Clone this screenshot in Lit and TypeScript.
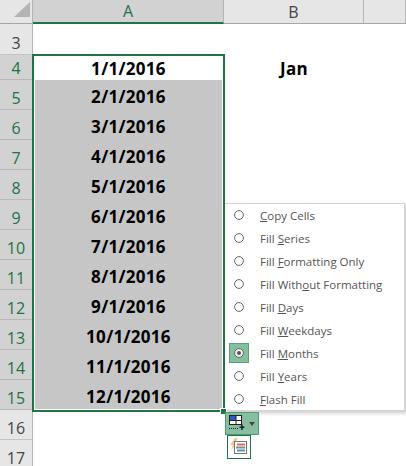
import { LitElement, css, html, svg } from 'lit'
import { customElement } from 'lit/decorators.js'

const ROWS = [
  { n: 3, h: 33 },
  { n: 4, h: 25, a: '1/1/2016', b: 'Jan' },
  { n: 5, h: 30, a: '2/1/2016' },
  { n: 6, h: 30, a: '3/1/2016' },
  { n: 7, h: 30, a: '4/1/2016' },
  { n: 8, h: 30, a: '5/1/2016' },
  { n: 9, h: 30, a: '6/1/2016' },
  { n: 10, h: 30, a: '7/1/2016' },
  { n: 11, h: 30, a: '8/1/2016' },
  { n: 12, h: 30, a: '9/1/2016' },
  { n: 13, h: 30, a: '10/1/2016' },
  { n: 14, h: 30, a: '11/1/2016' },
  { n: 15, h: 30, a: '12/1/2016' },
  { n: 16, h: 30 },
  { n: 17, h: 30 },
]

// [before, underlined key, after]
const MENU: [string, string, string][] = [
  ['', 'C', 'opy Cells'],
  ['Fill ', 'S', 'eries'],
  ['Fill ', 'F', 'ormatting Only'],
  ['Fill With', 'o', 'ut Formatting'],
  ['Fill ', 'D', 'ays'],
  ['Fill ', 'W', 'eekdays'],
  ['Fill ', 'M', 'onths'],
  ['Fill ', 'Y', 'ears'],
  ['', 'F', 'lash Fill'],
]

@customElement('app-root')
export class AppRoot extends LitElement {
  static styles = css`
    :host {
      display: block;
      position: relative;
      width: 406px;
      height: 466px;
      overflow: hidden;
      background: #fff;
      font-family: "Open Sans", "Noto Sans", sans-serif;
    }

    .cols {
      display: grid;
      grid-template-columns: 33px 191px 140px 1fr;
      height: 22px;
    }

    .head {
      display: flex;
      align-items: center;
      justify-content: center;
      background: #e6e6e6;
      border-right: 1px solid #b5b5b5;
      border-bottom: 1px solid #a6a6a6;
      box-sizing: border-box;
      font-size: 16px;
      color: #444;
    }

    .head.active {
      background: #d2d2d2;
      color: #217346;
      border-bottom: 2px solid #217346;
    }

    .corner {
      position: relative;
      overflow: hidden;
    }

    .corner svg {
      display: block;
      position: absolute;
      left: 14px;
      top: 2px;
    }

    .row {
      display: grid;
      grid-template-columns: 33px 191px 140px 1fr;
    }

    .num {
      display: flex;
      align-items: flex-end;
      justify-content: center;
      box-sizing: border-box;
      background: #e6e6e6;
      border-right: 1px solid #b5b5b5;
      border-bottom: 1px solid #c4c4c4;
      font-size: 16px;
      line-height: 22px;
      color: #444;
    }

    .num.active {
      background: #d2d2d2;
      color: #217346;
      border-bottom-color: #b8b8b8;
    }

    .cell {
      display: flex;
      align-items: center;
      justify-content: center;
      box-sizing: border-box;
      padding-top: 2px;
      font-size: 17px;
      letter-spacing: 0.3px;
      font-weight: 700;
      color: #000;
    }

    .cell.fill {
      background: #c6c6c6;
    }

    .selection {
      position: absolute;
      left: 32px;
      top: 54px;
      width: 193px;
      height: 358px;
      box-sizing: border-box;
      border: 2px solid #217346;
      outline: 1px solid #fff;
      outline-offset: -3px;
      pointer-events: none;
    }

    .handle {
      position: absolute;
      left: 220px;
      top: 408px;
      width: 5px;
      height: 5px;
      background: #217346;
      border: 1px solid #fff;
    }

    .menu {
      position: absolute;
      left: 225px;
      top: 203px;
      width: 180px;
      height: 208px;
      box-sizing: border-box;
      display: flex;
      flex-direction: column;
      background: #fff;
      border: 1px solid #d4d4d4;
      border-left: 0;
      box-shadow: 2px 2px 4px rgba(0, 0, 0, 0.22);
      font-size: 11.5px;
      color: #555;
    }

    .item {
      flex: none;
      box-sizing: border-box;
      display: flex;
      align-items: center;
      gap: 11px;
      height: 23px;
      padding: 0 0 1px 4px;
    }

    .radio {
      width: 20px;
      height: 20px;
      box-sizing: border-box;
      display: flex;
      align-items: center;
      justify-content: center;
    }

    .item.on .radio {
      background: #86bfa0;
      border: 1px solid #5f9f7d;
    }

    .radio svg {
      display: block;
    }

    .key {
      text-decoration: underline;
    }

    .paste {
      position: absolute;
      left: 225px;
      top: 412px;
      width: 34px;
      height: 23px;
      box-sizing: border-box;
      display: flex;
      align-items: center;
      gap: 2px;
      padding-left: 3px;
      background: #86bfa0;
      border: 1px solid #4f9a72;
    }

    .paste svg {
      flex: none;
      display: block;
    }

    .caret {
      flex: none;
      width: 0;
      height: 0;
      border: 3px solid transparent;
      border-top: 4px solid #444;
      border-bottom-width: 0;
    }

    .flash {
      position: absolute;
      left: 227px;
      top: 435px;
      width: 24px;
      height: 24px;
      box-sizing: border-box;
      display: flex;
      align-items: center;
      justify-content: center;
      background: #fff;
      border: 1px solid #217346;
    }
  `

  render() {
    return html`
      <div class="cols">
        <div class="head corner">
          <svg width="16" height="16" viewBox="0 0 16 16">
            <path d="M16 0V15H0Z" fill="#b4b4b4" />
          </svg>
        </div>
        <div class="head active">A</div>
        <div class="head">B</div>
        <div class="head"></div>
      </div>
      ${ROWS.map(
        (r) => html`
          <div class="row" style="height:${r.h}px">
            <div class="num ${r.n >= 4 && r.n <= 15 ? 'active' : ''}">${r.n}</div>
            <div class="cell ${r.n >= 5 && r.n <= 15 ? 'fill' : ''}">${r.a ?? ''}</div>
            <div class="cell">${r.b ?? ''}</div>
            <div></div>
          </div>
        `,
      )}
      <div class="selection"></div>
      <div class="menu">
        ${MENU.map(
          ([pre, key, post], i) => html`
            <div class="item ${i === 6 ? 'on' : ''}">
              <span class="radio">
                <svg width="12" height="12" viewBox="0 0 12 12">
                  <circle cx="6" cy="6" r="4.4" fill=${i === 6 ? '#f2f2f2' : 'none'} stroke="#666" stroke-width="1" />
                  ${i === 6 ? svg`<circle cx="6" cy="6" r="2" fill="#555" />` : ''}
                </svg>
              </span>
              <span>${pre}<span class="key">${key}</span>${post}</span>
            </div>
          `,
        )}
      </div>
      <div class="handle"></div>
      <div class="paste">
        <svg width="18" height="17" viewBox="0 0 18 17">
          <rect x="0.5" y="0.5" width="12" height="9" fill="#fff" stroke="#222" />
          <rect x="1" y="1" width="6" height="4" fill="#2b5fc7" />
          <path d="M1 5.5H12.5M7 1V9.5" stroke="#222" />
          <path d="M0 13.5H1M2 13.5H3M4 13.5H5M6 13.5H7M8 13.5H9" stroke="#222" />
          <path d="M13 9.5V15M10.5 12.2H15.5" stroke="#111" stroke-width="1.3" />
        </svg>
        <span class="caret"></span>
      </div>
      <div class="flash">
        <svg width="18" height="18" viewBox="0 0 18 18">
          <path d="M5 0L0 7H3L1 12L8 5H5L8 0Z" fill="#f3c58f" />
          <rect x="4.5" y="3.5" width="12" height="12" fill="#fff" stroke="#777" />
          <rect x="7" y="5.5" width="8" height="2" fill="#d0705e" />
          <rect x="6" y="8.5" width="9" height="2" fill="#8a8a8a" />
          <rect x="7" y="11.5" width="8" height="2" fill="#4c9ab8" />
        </svg>
      </div>
    `
  }
}
